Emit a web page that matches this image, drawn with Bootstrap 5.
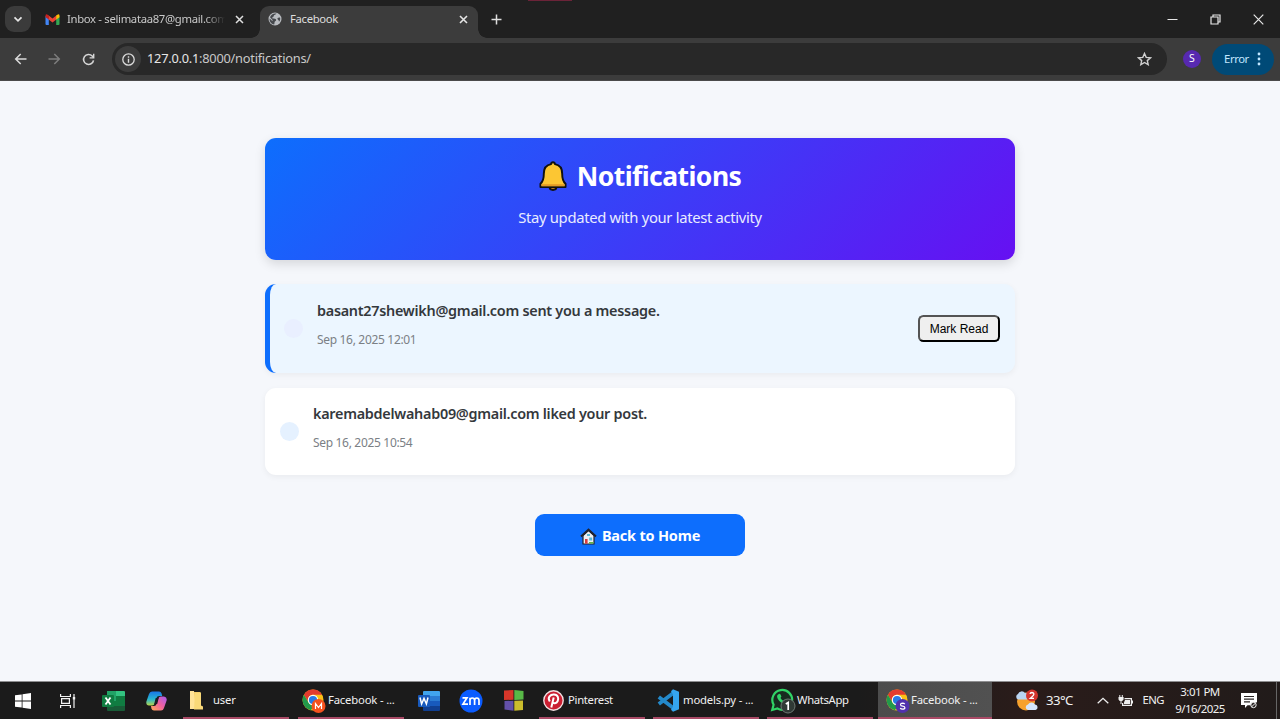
<!DOCTYPE html>
<html lang="en">
<head>
<meta charset="utf-8">
<meta name="viewport" content="width=device-width, initial-scale=1">
<title>Facebook</title>
<link href="https://cdn.jsdelivr.net/npm/bootstrap@5.3.0/dist/css/bootstrap.min.css" rel="stylesheet">
<style>
  :root { --ui: "Noto Sans", "Open Sans", sans-serif; }
  body { font-family: var(--ui); background: #f5f7fb; height: 719px; overflow: hidden; }
  svg { display: block; flex: none; }

  /* browser tabs */
  .tabstrip { height: 38px; background: #202020; color: #dedede; font-size: 11.3px; }
  .accent-line { left: 528px; top: 0; width: 44px; height: 1px; background: #6b2338; }
  .tab-search { width: 26px; height: 26px; margin-left: 5px; border-radius: 9px; background: #3b3b3b; }
  .tab-idle { width: 229px; padding-left: 14px; }
  .tab-name { letter-spacing: -.32px; white-space: nowrap; line-height: 18px; }
  .tab-idle .tab-name { width: 158px; margin-left: 7px; color: #c9c9c9; -webkit-mask: linear-gradient(90deg, #000 138px, transparent 158px); mask: linear-gradient(90deg, #000 138px, transparent 158px); }
  .tab-current { width: 218px; height: 32px; margin-top: 6px; background: #3c3c3c; border-radius: 9px 9px 0 0; padding: 0 10px 6px 8px; }
  .tab-current::before, .tab-current::after { content: ""; position: absolute; bottom: 0; width: 9px; height: 9px; }
  .tab-current::before { left: -9px; background: radial-gradient(circle at 0 0, transparent 8.5px, #3c3c3c 9px); }
  .tab-current::after { right: -9px; background: radial-gradient(circle at 100% 0, transparent 8.5px, #3c3c3c 9px); }
  .window-keys { gap: 32px; margin-right: 16px; }

  /* address bar */
  .toolbar { height: 43px; background: #3c3c3c; color: #d6d6d6; box-shadow: inset 0 -1px #4a4a4a; padding-bottom: 1px; }
  .omnibox { width: 1055px; height: 32px; border-radius: 16px; background: #282828; margin-left: 17px; padding: 0 15px 0 3px; }
  .site-info { width: 26px; height: 26px; border-radius: 50%; background: #3c3c3c; }
  .address { font-size: 12.8px; margin-left: 6px; letter-spacing: -.24px; color: #c9c9c9; }
  .address b { font-weight: 400; color: #e6e6e6; }
  .profile-dot { width: 18px; height: 18px; border-radius: 50%; background: #5729b0; color: #fff; font-size: 10.5px; margin-left: 16px; }
  .error-chip { width: 62px; height: 31px; border-radius: 16px; background: #004a77; color: #c2e7ff; font-size: 11.3px; margin-left: 11px; padding: 0 13px 0 12px; letter-spacing: -.4px; }

  /* page */
  .page { height: 601px; padding-top: 57px; }
  .feed { width: 750px; }
  .hero { height: 122px; border-radius: 11px; background: linear-gradient(135deg, #0d6efd, #6610f2); box-shadow: 0 4px 11px rgba(0,0,0,.13); padding-top: 21px; }
  .hero h1 { font-size: 26.5px; line-height: 34px; font-weight: 700; letter-spacing: -.55px; margin: 0 0 13px; gap: 10px; }
  .hero p { font-size: 14.8px; line-height: 22px; letter-spacing: -.32px; color: #e9ecff; }
  .notice { border-radius: 11px; background: #fff; box-shadow: 0 2px 6px rgba(0,0,0,.05); padding: 0 15px; }
  .notice.unread { height: 89px; margin-top: 24px; background: #ecf6ff; border-left: 5px solid #0d6efd; padding-left: 14px; }
  .notice.seen { height: 87px; margin-top: 15px; }
  .marker { width: 19px; height: 19px; border-radius: 50%; background: #e5f1ff; margin-right: 14px; }
  .unread .marker { background: #e9efff; }
  .notice h2 { font-size: 14.4px; font-weight: 600; line-height: 22px; margin: 0 0 9px; color: #34383c; letter-spacing: -.27px; }
  .notice time { font-size: 12px; line-height: 18px; color: #7b8085; letter-spacing: -.32px; display: block; margin-bottom: 9px; }
  .mark-read { width: 82px; height: 27px; border: 2px outset #000; border-radius: 5.5px; background: #efefef; font: 12px "Liberation Sans", Arial, sans-serif; color: #000; padding: 0; }
  .home-btn.btn { width: 210px; height: 42px; margin-top: 39px; border-radius: 9px; background: #0d6efd; color: #fff; font-weight: 700; font-size: 14.5px; letter-spacing: -.2px; gap: 5px; padding: 2px 0 0; }

  /* taskbar */
  .taskbar { height: 37px; background: linear-gradient(90deg, #1b1b1b 0 67%, #2a1c1a 80%, #211b1a 100%); color: #f1f1f1; font-size: 11.3px; box-shadow: 0 -1px #8e8e90; }
  .slot { width: 43px; }
  .task { width: 106px; border-bottom: 2px solid #a94a66; padding-left: 5px; padding-top: 2px; margin-right: 8px; letter-spacing: -.18px; white-space: nowrap; }
  .task.current { width: 114px; background: linear-gradient(90deg, #4c4c4c, #515151); padding-left: 8px; margin: 0; }
  .clock { width: 60px; font-size: 11.5px; line-height: 17px; letter-spacing: -.55px; padding-bottom: 2px; }
  .desk-edge { width: 1px; background: #666; }
</style>
</head>
<body class="d-flex flex-column">

<header>
  <div class="tabstrip d-flex align-items-center position-relative">
    <i class="accent-line position-absolute"></i>
    <div class="tab-search d-flex align-items-center justify-content-center">
      <svg width="10" height="7" viewBox="0 0 10 7" fill="none" stroke="#e6e6e6" stroke-width="1.7"><path d="M1.5 1.3 5 4.9 8.500 1.300"/></svg>
    </div>
    <div class="tab-idle d-flex align-items-center">
      <svg width="15" height="11" viewBox="0 0 15 11"><path fill="#4285f4" d="M.5 2v8q0 1 1 1h2.300V4.500z"/><path fill="#34a853" d="M11.200 4.500V11h2.300q1 0 1-1V2z"/><path fill="#ea4335" d="m3.300 1.200 4.200 3.200 4.200-3.200v4.100L7.500 8.500 3.300 5.300z"/><path fill="#c5221f" d="M.5 1.800Q.5 0 2.200.4l1.600 1.200v4L.5 3.200z"/><path fill="#fbbc04" d="M14.500 1.800q0-1.800-1.700-1.400l-1.600 1.200v4l3.300-2.400z"/></svg>
      <span class="tab-name">Inbox - selimataa87@gmail.com</span>
      <svg class="ms-auto" style="margin-right:16px" width="9" height="9" viewBox="0 0 9 9" stroke="#e0e0e0" stroke-width="1.5"><path d="m1 1 7 7M8 1 1 8"/></svg>
    </div>
    <div class="tab-current d-flex align-items-center position-relative">
      <svg width="14" height="14" viewBox="0 0 14 14"><circle cx="7" cy="7" r="6.500" fill="#b9bcc0"/><path fill="#45484c" d="M8.500 1.600c-.5 1.500-2.800 1-2.800 2.500S4 5 4 6.200l3 .5c1.600.3 1.500 2 .2 2.500-1 .5-.4 2-1 3.200C2.800 12 1.200 9 1.700 6.500l2.800 2.700V8L2 5.300C3 2.500 5.600 1 8.500 1.600zM12 5.500c-1 .3-2.500-.2-2.600 1.100 0 1.500 1.600 1.200 1.600 3.200 1.200-1.300 1.500-2.800 1-4.300z"/></svg>
      <span class="tab-name ms-2">Facebook</span>
      <svg class="ms-auto" width="9" height="9" viewBox="0 0 9 9" stroke="#e4e4e4" stroke-width="1.600"><path d="m1 1 7 7M8 1 1 8"/></svg>
    </div>
    <svg style="margin-left:13px" width="11" height="11" viewBox="0 0 11 11" stroke="#dedede" stroke-width="1.500"><path d="M5.500.5v10M.5 5.500h10"/></svg>
    <div class="window-keys d-flex align-items-center ms-auto">
      <svg width="11" height="11" viewBox="0 0 11 11" stroke="#e8e8e8"><path d="M.5 5.500h10"/></svg>
      <svg width="11" height="11" viewBox="0 0 11 11" fill="none" stroke="#e8e8e8" stroke-width="1.200"><path d="M1 3h7v7H1zM3 3V1h7v7H8"/></svg>
      <svg width="11" height="11" viewBox="0 0 11 11" stroke="#e8e8e8" stroke-width="1.200"><path d="m.7.700 9.600 9.600M10.300.7.700 10.300"/></svg>
    </div>
  </div>

  <div class="toolbar d-flex align-items-center">
    <svg style="margin-left:14px" width="13" height="12" viewBox="0 0 13 12" fill="none" stroke="#dadada" stroke-width="1.500"><path d="M12.500 6H2M6.700 1 1.700 6l5 5"/></svg>
    <svg style="margin-left:21px" width="13" height="12" viewBox="0 0 13 12" fill="none" stroke="#7d7d7d" stroke-width="1.500"><path d="M.5 6H11M6.300 1l5 5-5 5"/></svg>
    <svg style="margin-left:21px" width="13" height="13" viewBox="0 0 13 13"><path fill="none" stroke="#d6d6d6" stroke-width="1.600" d="M11.500 7.300A5 5 0 1 1 10.200 3l1.300 1.400"/><path fill="#d6d6d6" d="M12.400.8v4.800H7.600V4.200H11V.8z"/></svg>
    <div class="omnibox d-flex align-items-center">
      <span class="site-info d-flex align-items-center justify-content-center">
        <svg width="13" height="13" viewBox="0 0 13 13"><circle cx="6.500" cy="6.500" r="5.700" fill="none" stroke="#dcdcdc" stroke-width="1.300"/><path fill="#dcdcdc" d="M5.800 5.800h1.400v4H5.800zM5.800 3.200h1.400v1.500H5.800z"/></svg>
      </span>
      <span class="address"><b>127.0.0.1</b>:8000/notifications/</span>
      <svg class="ms-auto" width="15" height="14" viewBox="0 0 15 14" fill="none" stroke="#d0d0d0" stroke-width="1.400"><path d="m7.500 1.500 1.700 3.900 4.300.4-3.200 2.800.9 4.100-3.700-2.200-3.700 2.200.9-4.100-3.200-2.800 4.300-.4z"/></svg>
    </div>
    <span class="profile-dot d-flex align-items-center justify-content-center">S</span>
    <div class="error-chip d-flex align-items-center justify-content-between">Error
      <svg width="4" height="14" viewBox="0 0 4 14" fill="#c2e7ff"><circle cx="2" cy="2" r="1.400"/><circle cx="2" cy="7" r="1.400"/><circle cx="2" cy="12" r="1.400"/></svg>
    </div>
  </div>
</header>

<main class="page d-flex flex-column align-items-center">
  <section class="feed hero text-center text-white">
    <h1 class="d-flex justify-content-center align-items-center">
      <svg width="28" height="30" viewBox="0 0 29 31" stroke="#111" stroke-width="2" stroke-linejoin="round"><path fill="#d18a1c" d="M11 27q0 3 3.500 3t3.500-3z"/><path fill="#fcc633" d="M14.500 1.200q-1.800 0-2 2C7.600 4 5 8 5 13c0 6-.8 8.500-3.500 10.500V27h26v-3.500C24.800 21.500 24 19 24 13c0-5-2.600-9-7.500-9.800q-.2-2-2-2z"/><path fill="#e39b25" stroke="none" d="M2.500 24h24v2h-24z"/></svg>
      <span>Notifications</span>
    </h1>
    <p class="m-0">Stay updated with your latest activity</p>
  </section>

  <article class="feed notice unread d-flex align-items-center">
    <span class="marker"></span>
    <div><h2>basant27shewikh@gmail.com sent you a message.</h2><time>Sep 16, 2025 12:01</time></div>
    <button class="mark-read ms-auto" type="button">Mark Read</button>
  </article>
  <article class="feed notice seen d-flex align-items-center">
    <span class="marker"></span>
    <div><h2>karemabdelwahab09@gmail.com liked your post.</h2><time>Sep 16, 2025 10:54</time></div>
  </article>

  <a class="btn home-btn d-flex align-items-center justify-content-center" href="#">
    <svg width="17" height="17" viewBox="0 0 17 17"><path fill="#eef0f4" stroke="#20222e" stroke-width="1.200" d="M3 7.500V16h11V7.500L8.500 2.500z"/><path fill="none" stroke="#20222e" stroke-width="2" d="m1 8.500 7.500-7 7.500 7"/><path fill="#d83b3b" d="M5 11h2.600v4.600H5z"/><path fill="#5bb8d6" d="M9.200 9.500h3v3h-3zM7 6h3v2H7z"/><path fill="#65b54a" d="M9 14h4.500v1.600H9z"/></svg>
    <span>Back to Home</span>
  </a>
</main>

<footer class="taskbar d-flex align-items-stretch">
  <span class="slot d-flex align-items-center justify-content-center" style="width:45px"><svg width="16" height="16" viewBox="0 0 16 16" fill="#fff"><path d="M0 2.300 6.700 1.400v6.200H0zM7.500 1.300 16 0v7.600H7.500zM0 8.400h6.700v6.200L0 13.700zM7.500 8.400H16V16l-8.500-1.300z"/></svg></span>
  <span class="slot d-flex align-items-center justify-content-center" style="width:45px"><svg width="16" height="16" viewBox="0 0 16 16" fill="none" stroke="#f2f2f2" stroke-width="1.200"><path d="M.6 1v2.500h9.800V1M.6 15v-2.500h9.800V15M1.600 5.600h7.800v4.800H1.600zM14 1v14"/><path stroke-width="2.400" d="M14 4v2.500"/></svg></span>
  <span class="slot d-flex align-items-center justify-content-center" style="width:47px"><svg width="23" height="20" viewBox="0 0 23 20"><path fill="#21a366" d="M5 0h9v10H5z"/><path fill="#33c481" d="M14 0h8q1 0 1 1v4h-9z"/><path fill="#107c41" d="M5 10h9v5H5zM14 5h9v5h-9z"/><path fill="#185c37" d="M5 15v4q0 1 1 1h16q1 0 1-1v-4z"/><path fill="#107c41" d="M14 10h9v5h-9z"/><rect y="4" width="12" height="12" rx="1" fill="#107c41"/><path stroke="#fff" stroke-width="1.800" d="m3.500 6.500 5 7M8.500 6.500l-5 7"/></svg></span>
  <span class="slot d-flex align-items-center justify-content-center" style="width:39px"><svg width="21" height="20" viewBox="0 0 21 20"><defs><linearGradient id="cpA" x1="0" y1="0" x2="0" y2="1"><stop offset="0" stop-color="#1976e8"/><stop offset=".55" stop-color="#28b6cf"/><stop offset="1" stop-color="#b8d64a"/></linearGradient><linearGradient id="cpB" x1="1" y1="0" x2="0" y2="1"><stop offset="0" stop-color="#a65cf0"/><stop offset=".5" stop-color="#f0609c"/><stop offset="1" stop-color="#ffae55"/></linearGradient></defs><path fill="url(#cpA)" d="M6 .5h7q2 0 2.600 2l.6 2.500h-3Q11 5 10.300 7.300l-1.500 5Q8 14.500 6 14.500H3Q-.3 14 .4 10.500L3 3Q3.800.5 6 .5z"/><path fill="url(#cpB)" d="M15 19.500H8q-2 0-2.600-2L5 15h3q2 0 2.700-2.200l1.500-5Q13 5.500 15 5.500h3q3.300.5 2.600 4L18 17q-.8 2.500-3 2.500z"/><path fill="#1c1c25" d="M9.700 7h3l-1.500 6h-3z"/></svg></span>
  <div class="task d-flex align-items-center" style="margin-left:7px;margin-right:9px;padding-left:6px"><svg width="15" height="19" viewBox="0 0 15 19"><path fill="#f0c75e" d="M1 1h10l1 2v15H1z"/><path fill="#ffe398" d="M1 0h4l2 18H1z"/><path fill="#f9d978" d="M6 1.500h6v13l2 1v3H5z"/></svg><span style="margin-left:9px">user</span></div>
  <div class="task d-flex align-items-center" style="margin-right:3px;padding-left:4px"><svg width="24" height="24" viewBox="0 0 24 24"><use href="#chromeBall"/><circle cx="16.500" cy="17" r="7" fill="#f4511e"/><path fill="none" stroke="#fff" stroke-width="1.200" d="M13.500 20v-5.500l3 4 3-4V20"/></svg><span style="margin-left:2px">Facebook - ...</span></div>
  <span class="slot d-flex align-items-center justify-content-center"><svg width="22" height="20" viewBox="0 0 22 20"><path fill="#41a5ee" d="M5 1q0-1 1-1h15q1 0 1 1v4H5z"/><path fill="#2b7cd3" d="M5 5h17v5H5z"/><path fill="#185abd" d="M5 10h17v5H5z"/><path fill="#103f91" d="M5 15h17v4q0 1-1 1H6q-1 0-1-1z"/><rect y="4" width="12" height="12" rx="1" fill="#185abd"/><path fill="none" stroke="#fff" stroke-width="1.500" d="m2 6.500 1.600 6.500L6 7.500 8.400 13 10 6.500"/></svg></span>
  <span class="slot d-flex align-items-center justify-content-center" style="width:42px"><svg width="24" height="24" viewBox="0 0 24 24"><circle cx="12" cy="12" r="11.500" fill="#0b5cff"/><path fill="none" stroke="#fff" stroke-width="1.700" d="M3.500 8.800H8l-4 6.300h5M11 16V8.800M11 11.500q0-2.500 2.300-2.500t2.300 2.500V16M15.600 11.500q0-2.500 2.200-2.500t2.200 2.500V16"/></svg></span>
  <span class="slot d-flex align-items-center justify-content-center" style="margin-right:4px"><svg width="20" height="21" viewBox="0 0 20 21"><path fill="#d8362a" d="M0 .5 9.500 0v9.800L0 10z"/><path fill="#58b947" d="M10.300 0 19.500 1v8.500l-9.200.5z"/><path fill="#6350a8" d="M.5 11l9-.3v10L.5 19.500z"/><path fill="#cbbd2c" d="m10.300 10.800 8.700-.3V20l-8.700.8z"/></svg></span>
  <div class="task d-flex align-items-center" style="padding-left:4px"><svg width="21" height="21" viewBox="0 0 21 21"><circle cx="10.500" cy="10.500" r="9.700" fill="#cb1f32" stroke="#f2dfe1" stroke-width="1.400"/><path fill="none" stroke="#fff" stroke-width="2" d="M6.800 11.500C4 7.500 7.500 4.300 11 4.500c4 .2 5 4 3.600 6.700-1.200 2.400-4.200 2.600-5 .8M10.700 7.500 8.300 17.500"/></svg><span style="margin-left:4px;letter-spacing:-.3px">Pinterest</span></div>
  <div class="task d-flex align-items-center" style="padding-left:4px"><svg width="22" height="23" viewBox="0 0 22 23"><path fill="none" stroke="#2489ca" stroke-width="3.800" stroke-linejoin="round" d="M1.800 8 17 19.500M1.800 15 17 3.500"/><path fill="#35a5ee" d="m16 .3 6 2.500v17.400l-6 2.500-2-2 2-3.200V5.500l-2-3.200z"/></svg><span class="ms-1">models.py - ...</span></div>
  <div class="task d-flex align-items-center" style="padding-left:3px;margin-right:5px"><svg width="26" height="26" viewBox="0 0 26 26"><path fill="#182b1f" stroke="#31d366" stroke-width="2.200" d="m2.200 22 1.400-5.300A9.900 9.900 0 1 1 7.400 20.500z"/><path fill="#31d366" d="M8.500 6.300q1.200-1 2 .2l.9 2-.9 1.400q1 2 3.200 3l1.300-1.300 2.300 1q1 2-1.500 3c-4 1-9-4-8.700-7.500q.2-1.200 1.400-1.800z"/><circle cx="18" cy="18" r="7" fill="#303935" stroke="#6d7772"/><path fill="none" stroke="#fff" stroke-width="1.700" d="m15.800 16 2.400-1.500V22"/></svg><span style="margin-left:1px;letter-spacing:-.35px">WhatsApp</span></div>
  <div class="task current d-flex align-items-center"><svg width="24" height="24" viewBox="0 0 24 24"><g id="chromeBall"><circle cx="11" cy="11" r="10.500" fill="#fbc116"/><path fill="#e33b2e" d="M11 .5A10.500 10.500 0 0 1 20.100 5.800H11a5.200 5.200 0 0 0-4.500 7.800L1.900 5.800A10.500 10.500 0 0 1 11 .5z"/><path fill="#229a4b" d="M1.900 5.800 6.500 13.600A5.200 5.200 0 0 0 11 16.200l1.500-.2-3.700 5.200A10.500 10.500 0 0 1 1.900 5.800z"/><circle cx="11" cy="11" r="5.200" fill="#fff"/><circle cx="11" cy="11" r="4.100" fill="#287ae6"/></g><circle cx="16.500" cy="17" r="7" fill="#5131ad"/><path fill="none" stroke="#fff" stroke-width="1.200" d="M18.800 15.200q-.8-1-2.300-1-2 .1-2 1.500 0 1.200 2.200 1.500t2.200 1.500q0 1.400-2.300 1.400-1.700 0-2.400-1"/></svg><span style="margin-left:1px">Facebook - ...</span></div>
  <div class="d-flex align-items-center" style="margin-left:23px">
    <svg width="24" height="23" viewBox="0 0 24 23"><circle cx="11" cy="12.500" r="9" fill="#f6a12d"/><path fill="#b9d4f2" d="M3 10.500a3 3 0 0 1 0-5.500 4 4 0 0 1 7-1 3.300 3.300 0 0 1 1.500 6.500z"/><path fill="#d4e5fb" d="M13 21a2.800 2.800 0 0 1 0-5.500 4 4 0 0 1 7 0 2.800 2.800 0 0 1 .5 5.500z"/><circle cx="17" cy="6.500" r="6" fill="#d5352e"/><path fill="none" stroke="#fff" stroke-width="1.300" d="M15 5q.2-1.500 2-1.500 1.900.1 1.900 1.600 0 1-1.800 2.600L15.300 9.300H19"/></svg>
    <span style="font-size:13.200px;margin-left:7px;letter-spacing:-.6px">33°C</span>
  </div>
  <div class="d-flex align-items-center ms-auto">
    <svg width="12" height="7" viewBox="0 0 12 7" fill="none" stroke="#eee" stroke-width="1.300"><path d="m.7 6.300 5.300-5 5.300 5"/></svg>
    <svg style="margin-left:9px" width="15" height="12" viewBox="0 0 15 12"><path fill="none" stroke="#eee" stroke-width="1.200" d="M6.500 3.600h6.900v6.800H4.600V8"/><path fill="#eee" d="M7 5h5v4H6V7.500zM13.500 5.500H15v3h-1.500zM1.300 0h1v2h1.500V0h1v2h.8v2.500L4.200 6H3.500v3h-1V6h-.8L.5 4.500V2h.8z"/></svg>
    <span style="margin-left:9px;letter-spacing:-.5px">ENG</span>
    <span class="clock text-center" style="margin-left:6px">3:01 PM<br>9/16/2025</span>
    <svg style="margin-left:11px" width="17" height="16" viewBox="0 0 17 16"><path fill="#fff" d="M0 0h16v9.500l-1-.3-3 3H6.500L4 15v-3H0z"/><path stroke="#2a2423" stroke-width="1.200" d="M3 3.500h10M3 6.200h10M3 8.900h6"/><circle cx="12.500" cy="12" r="2.700" fill="#2a2423" stroke="#eee"/><path stroke="#eee" d="m10.500 13.900 4-3.800"/></svg>
  </div>
  <span class="desk-edge" style="margin-left:18px;margin-right:3px"></span>
</footer>

<script src="https://cdn.jsdelivr.net/npm/bootstrap@5.3.0/dist/js/bootstrap.bundle.min.js"></script>
</body>
</html>
